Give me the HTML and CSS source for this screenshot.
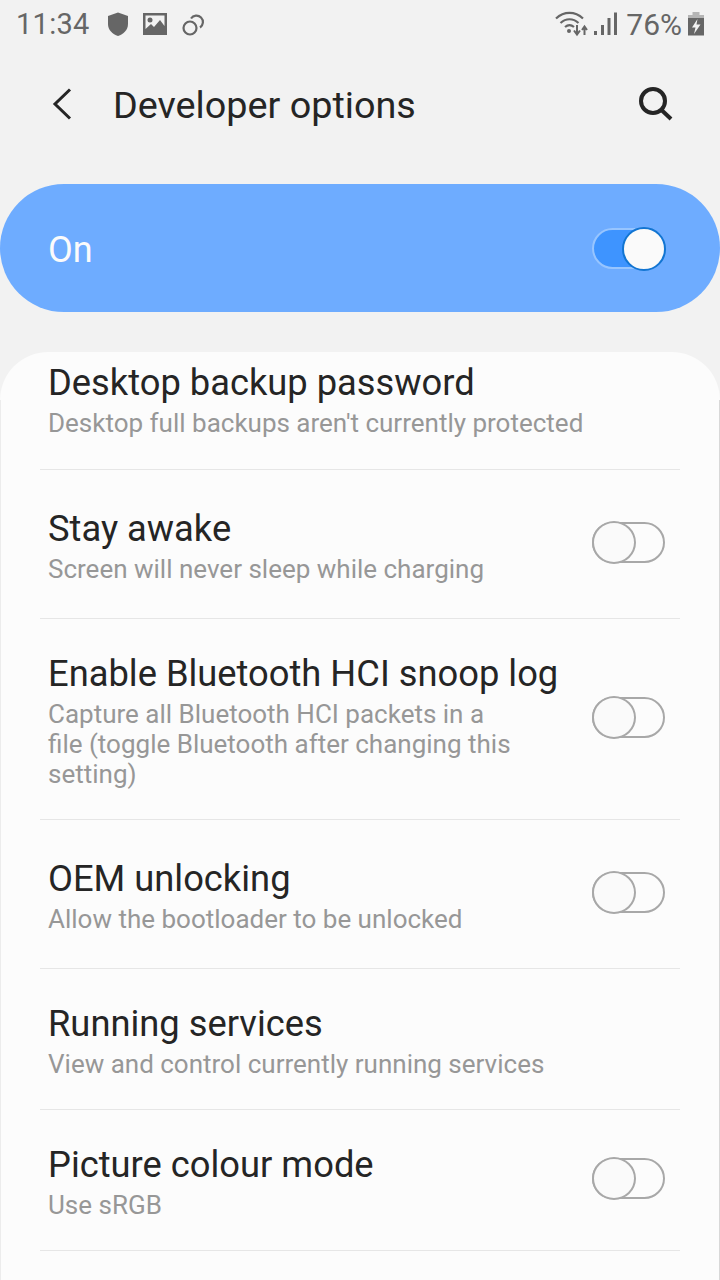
FILE: index.html
```html
<!DOCTYPE html>
<html lang="en">
<head>
<meta charset="utf-8">
<title>Developer options</title>
<link rel="stylesheet" href="styles.css">
</head>
<body>
<div class="status">
  <span class="time">11:34</span>
  <svg class="ic" width="22" height="26" viewBox="1 0 22 26"><path d="M12 1.500L22 5V13C22 19 17.500 23 12 25C6.500 23 2 19 2 13V5Z" fill="#666"/></svg>
  <svg class="ic" width="24" height="24" viewBox="1 0 24 24"><path fill-rule="evenodd" d="M1 1H25V23H1ZM3.500 3.500V17L9 12L12 15L18 8L22.500 14V3.500Z" fill="#666"/><circle cx="8" cy="8" r="2.500" fill="#666"/></svg>
  <svg class="ic" width="26" height="26" viewBox="0 0 26 26"><g fill="none" stroke="#666" stroke-width="2.200"><circle cx="9" cy="17" r="6.500"/><path d="M10 7.500A6.500 6.500 0 1 1 19 16.500"/></g></svg>
  <span class="spacer"></span>
  <svg class="wifi" width="34" height="26" viewBox="0 0 34 26"><g fill="none" stroke="#666" stroke-width="2.200"><path d="M1 7.500C9 0 20 0 28 7.500"/><path d="M5.500 12C11 7 18 7 23.500 12"/><path d="M10 16C13 13.500 16 13.500 19 16"/></g><circle cx="14" cy="20" r="2" fill="#666"/><path d="M22 14V22M19 19.500L22 23.500L25 19.500" fill="none" stroke="#666" stroke-width="2"/><path d="M29.500 24V16M27 19L29.500 15.500L32 19" fill="none" stroke="#666" stroke-width="2"/></svg>
  <svg class="signal" width="24" height="24" viewBox="0 0 24 24"><path d="M1 19H4V23H1ZM8 13H11V23H8ZM14.500 6H17.500V23H14.500ZM21 0.500H24V23H21Z" fill="#666"/></svg>
  <span class="pct">76%</span>
  <svg class="batt" width="16" height="24" viewBox="0 0 16 24"><path d="M4.500 0H11.500V3H16V6H0V3H4.500Z" fill="#b5b5b5"/><path fill-rule="evenodd" d="M0 6H16V23.500H0ZM9.500 7L4 15.500H7.500L6 22L12.500 12.500H8.500Z" fill="#666"/></svg>
</div>
<header class="appbar">
  <svg class="back" width="20" height="32" viewBox="0 0 20 32"><path d="M18 1.500L3 16L18 30.500" fill="none" stroke="#252525" stroke-width="3"/></svg>
  <h1 class="title">Developer options</h1>
  <span class="spacer"></span>
  <svg class="search" width="38" height="38" viewBox="0 0 38 38"><circle cx="17" cy="16" r="12" fill="none" stroke="#252525" stroke-width="4"/><path d="M25.500 25L35 34" stroke="#252525" stroke-width="4"/></svg>
</header>
<section class="master">
  <span class="master-label">On</span>
  <span class="switch on"></span>
</section>
<main class="card">
  <div class="row first">
    <div class="text">
      <div class="name">Desktop backup password</div>
      <div class="desc">Desktop full backups aren't currently protected</div>
    </div>
  </div>
  <div class="row roomy">
    <div class="text">
      <div class="name">Stay awake</div>
      <div class="desc">Screen will never sleep while charging</div>
    </div>
    <span class="switch"></span>
  </div>
  <div class="row">
    <div class="text">
      <div class="name">Enable Bluetooth HCI snoop log</div>
      <div class="desc narrow">Capture all Bluetooth HCI packets in a file (toggle Bluetooth after changing this setting)</div>
    </div>
    <span class="switch"></span>
  </div>
  <div class="row roomy">
    <div class="text">
      <div class="name">OEM unlocking</div>
      <div class="desc">Allow the bootloader to be unlocked</div>
    </div>
    <span class="switch"></span>
  </div>
  <div class="row">
    <div class="text">
      <div class="name">Running services</div>
      <div class="desc">View and control currently running services</div>
    </div>
  </div>
  <div class="row">
    <div class="text">
      <div class="name">Picture colour mode</div>
      <div class="desc">Use sRGB</div>
    </div>
    <span class="switch"></span>
  </div>
</main>
</body>
</html>
```

FILE: styles.css
```css
* { box-sizing: border-box; }
html, body { margin: 0; height: 1280px; overflow: hidden; }
body { background: #f2f2f2; font-family: Roboto, "Liberation Sans", sans-serif; width: 720px; }
.spacer { flex: 1; }
.status { height: 48px; display: flex; align-items: center; padding: 0 16px 0 16px; color: #666; }
.time { font-size: 29px; margin-right: 17px; letter-spacing: 0.3px; }
.ic { margin-right: 14px; }
.wifi { margin-right: 4px; }
.signal { margin-right: 9px; }
.pct { font-size: 30px; margin-right: 6px; }
.appbar { height: 112px; display: flex; align-items: center; padding: 0 46px 0 52px; }
.back { margin-right: 41px; }
.title { margin: 2px 0 0; font-size: 37.75px; font-weight: 400; color: #252525; }
.master { height: 128px; margin-top: 24px; background: #6eacff; border-radius: 64px; display: flex; align-items: center; justify-content: space-between; padding: 0 55px 0 48px; }
.master-label { font-size: 36px; color: #fbfbfb; margin-top: 3px; }
.switch { position: relative; width: 73px; height: 41px; margin-bottom: 7px; border-radius: 21px; border: 2px solid #a8a8a8; flex: none; }
.switch::after { content: ""; box-sizing: border-box; position: absolute; left: -2px; top: -3px; width: 44px; height: 43px; border-radius: 50%; border: 2px solid #a8a8a8; background: #fafafa; }
.switch.on { margin-bottom: 0; background: #3e94ff; border-color: #97c5ff; }
.switch.on::after { left: 28px; width: 44px; height: 44px; border-color: #1275d2; }
.card { margin-top: 40px; height: 940px; border-radius: 48px 48px 0 0; padding: 0 40px; background: linear-gradient(#ececec, #ececec) left 48px / 1px 100% no-repeat, linear-gradient(#d8d8d8, #d8d8d8) right 48px / 1px 100% no-repeat, #fcfcfc; }
.row { display: flex; align-items: center; justify-content: space-between; border-bottom: 1px solid #e6e6e6; padding: 34px 15px 30px 8px; }
.row.first { padding: 10px 8px 31px; }
.row.roomy { padding-top: 38px; padding-bottom: 34px; }
.name { font-size: 36.3px; line-height: 42px; color: #252525; }
.desc { font-size: 26px; line-height: 30px; color: #979797; margin-top: 4px; }
.desc.narrow { width: 470px; }
```
